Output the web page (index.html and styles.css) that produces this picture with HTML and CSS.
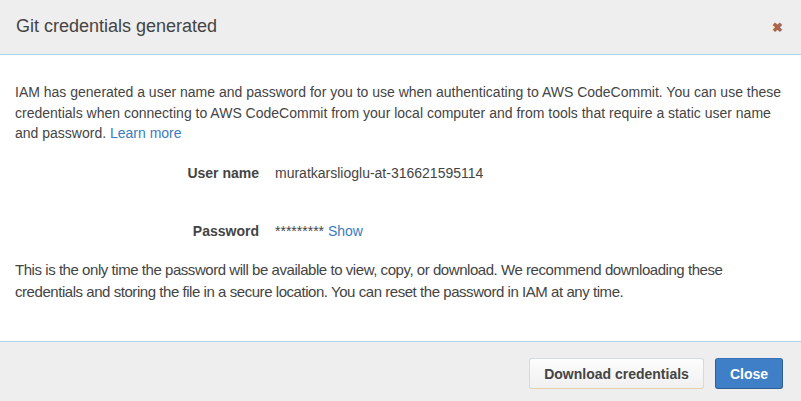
FILE: index.html
```html
<!DOCTYPE html>
<html>
<head>
<meta charset="utf-8">
<link rel="stylesheet" href="styles.css">
</head>
<body>
<div class="modal">
  <div class="modal-header">
    <h1 class="title">Git credentials generated</h1>
    <span class="close-x">&#x2716;</span>
  </div>
  <div class="modal-body">
    <p class="intro">IAM has generated a user name and password for you to use when authenticating to AWS CodeCommit. You can use these credentials when connecting to AWS CodeCommit from your local computer and from tools that require a static user name and password. <a class="link link-inline">Learn more</a></p>
    <div class="field field-user">
      <span class="label">User name</span>
      <span class="value">muratkarslioglu-at-316621595114</span>
    </div>
    <div class="field field-pass">
      <span class="label">Password</span>
      <span class="value">********* <a class="link">Show</a></span>
    </div>
    <p class="note">This is the only time the password will be available to view, copy, or download. We recommend downloading these credentials and storing the file in a secure location. You can reset the password in IAM at any time.</p>
  </div>
  <div class="modal-footer">
    <button class="btn btn-default">Download credentials</button>
    <button class="btn btn-primary">Close</button>
  </div>
</div>
</body>
</html>
```
FILE: styles.css
```css
html, body {
  margin: 0;
  padding: 0;
  background: #fff;
}
body {
  font-family: "Liberation Sans", Arial, sans-serif;
  color: #444;
  font-size: 14px;
}
.modal {
  width: 801px;
  height: 401px;
  display: flex;
  flex-direction: column;
}
.modal-header {
  height: 54px;
  background: #eeeeee;
  border-bottom: 1px solid #aed2e6;
  display: flex;
  align-items: center;
  justify-content: space-between;
  padding: 0 16px;
}
.title {
  margin: 0;
  font-size: 18px;
  font-weight: normal;
  color: #444;
  padding-bottom: 2px;
}
.close-x {
  color: #a9664a;
  font-size: 13px;
  font-weight: bold;
  padding-right: 2px;
}
.modal-body {
  height: 286px;
  padding: 0 15px;
}
.intro {
  margin: 0;
  padding-top: 27px;
  line-height: 20.5px;
}
.link {
  color: #3a7cbf;
}
.link-inline {
  display: inline-block;
  line-height: 16px;
}
.field {
  display: flex;
  align-items: baseline;
}
.field-user {
  margin-top: 21px;
}
.field-pass {
  margin-top: 42px;
}
.label {
  width: 260px;
  text-align: right;
  font-weight: bold;
  padding-right: 16px;
  box-sizing: border-box;
}
.value {
  color: #444;
}
.note {
  margin: 20px 0 0;
  font-size: 15px;
  line-height: 22px;
  letter-spacing: -0.45px;
}
.modal-footer {
  flex: 1;
  background: #eeeeee;
  border-top: 1px solid #aed2e6;
  display: flex;
  justify-content: flex-end;
  align-items: flex-start;
  padding: 16px 18px 0 0;
  gap: 11px;
}
.btn {
  font-family: "Liberation Sans", Arial, sans-serif;
  font-size: 14px;
  font-weight: bold;
  height: 31px;
  border-radius: 3px;
  padding: 0 14px;
}
.btn-default {
  width: 175px;
  color: #444;
  background: linear-gradient(#fdfdfd, #f0f0f0);
  border: 1px solid #cfdbe6;
  border-bottom-color: #e6d2a8;
}
.btn-primary {
  width: 68px;
  color: #fff;
  background: #3f7fc7;
  border: 1px solid #2e5e94;
  border-top-color: #3a73b3;
}
```
